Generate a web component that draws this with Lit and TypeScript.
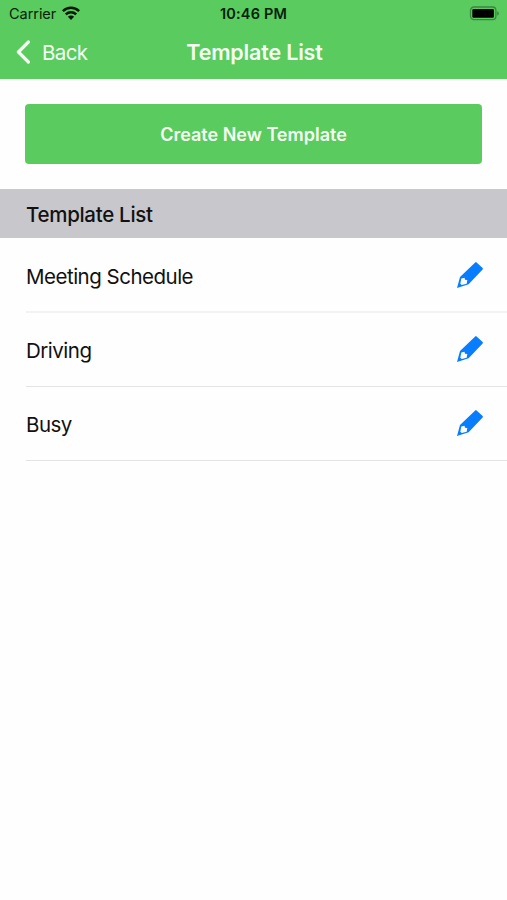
import { LitElement, html, css } from "lit";
import { customElement, property } from "lit/decorators.js";

@customElement("status-bar")
class StatusBar extends LitElement {
  static styles = css`
    :host { display: grid; grid-template-columns: 1fr auto 1fr; align-items: center; height: 28px; padding: 0 7px 0 9px; color: #06210a; }
    .carrier { display: flex; align-items: center; gap: 6px; font-size: 14.5px; letter-spacing: -0.05px; }
    .time { font-size: 14.5px; font-weight: 600; letter-spacing: 0.18px; margin-right: 2px; }
    .battery { justify-self: end; display: block; margin-top: -2px; }
    .wifi { display: block; margin-top: -2px; }
  `;
  render() {
    return html`
      <div class="carrier">
        <span>Carrier</span>
        <svg class="wifi" width="18" height="14" viewBox="0 0 18 14" fill="none" stroke="#031706" stroke-width="2.5">
          <path d="M0.9 5.1C5.5 0.7 12.5 0.7 17.1 5.1" />
          <path d="M3.8 8.4C6.8 5.6 11.2 5.6 14.2 8.4" />
          <path d="M5.9 10.8C7.8 9.2 10.2 9.2 12.1 10.8L9 14Z" fill="#031706" stroke="none" />
        </svg>
      </div>
      <div class="time">10:46 PM</div>
      <svg class="battery" width="31" height="15" viewBox="0 0 31 15">
        <rect x="1.5" y="1" width="25.4" height="12.6" rx="3.4" fill="none" stroke="#3a873e" stroke-width="1.3" />
        <rect x="3.3" y="2.9" width="21.6" height="8.8" rx="1.2" fill="#000" />
        <path d="M28.2 5.2C30.4 6 30.4 8.8 28.2 9.6Z" fill="#3a873e" />
      </svg>
    `;
  }
}

@customElement("nav-bar")
class NavBar extends LitElement {
  static styles = css`
    :host { display: grid; grid-template-columns: 1fr auto 1fr; align-items: center; height: 49px; padding: 0 15px; color: #f4fff2; }
    .back { display: flex; align-items: center; gap: 10px; font-size: 20.5px; letter-spacing: -0.6px; }
    .label { padding-top: 1px; }
    .title { font-size: 21.5px; font-weight: 600; letter-spacing: -0.18px; margin-left: 2px; }
    .chevron { display: block; margin-bottom: 1px; }
  `;
  render() {
    return html`
      <div class="back">
        <svg class="chevron" width="17" height="24" viewBox="0 0 17 24" fill="none" stroke="currentColor" stroke-width="3.2" stroke-linecap="round" stroke-linejoin="round">
          <path d="M13.4 2L3.4 12L13.4 22" />
        </svg>
        <span class="label">Back</span>
      </div>
      <div class="title">Template List</div>
    `;
  }
}

@customElement("template-row")
class TemplateRow extends LitElement {
  @property() name = "";
  static styles = css`
    :host { display: flex; align-items: center; justify-content: space-between; box-sizing: border-box; height: 74px; margin-left: 26px; padding-right: 23px; border-bottom: 1px solid #e4e4e5; font-size: 20.5px; letter-spacing: -0.5px; color: #111; }
    :host(:first-of-type) { border-bottom: 2px solid #f3f3f4; height: 75px; padding-top: 2px; }
    .name { padding-top: 3px; }
    .pencil { display: block; margin-bottom: 2px; }
  `;
  render() {
    return html`
      <span class="name">${this.name}</span>
      <svg class="pencil" width="28" height="28" viewBox="0 0 28 28">
        <path fill="#087dfd" fill-rule="evenodd" d="M19.2 1.4Q19.9 0.8 20.6 1.4L26.6 7.1Q27.3 7.8 26.6 8.5L12.6 23.2L1 26.9L4 16ZM5.3 17.6L4.3 22.8L5.7 24.1L10.7 22.7L11.3 19.1L9 18.8L8.5 16.7Z" />
      </svg>
    `;
  }
}

@customElement("app-root")
class AppRoot extends LitElement {
  static styles = css`
    :host { display: block; min-height: 900px; background: #fefefe; font-family: Inter, "Liberation Sans", sans-serif; line-height: 1.2; }
    .header { height: 79px; background: #5acb5e; }
    .action { padding: 25px 25px; height: 60px; }
    .create { display: block; width: 100%; height: 60px; border: 0; border-radius: 4px; background: #5acb5e; color: #f4fff2; font: 600 18px Inter, "Liberation Sans", sans-serif; letter-spacing: 0; }
    .section { display: flex; align-items: center; box-sizing: border-box; height: 49px; padding: 3px 0 0 26px; background: #c8c7cc; color: #111; font-size: 20.5px; font-weight: 500; letter-spacing: -0.3px; }
  `;
  private templates = ["Meeting Schedule", "Driving", "Busy"];
  render() {
    return html`
      <div class="header">
        <status-bar></status-bar>
        <nav-bar></nav-bar>
      </div>
      <div class="action"><button class="create">Create New Template</button></div>
      <div class="section">Template List</div>
      ${this.templates.map((name) => html`<template-row .name=${name}></template-row>`)}
    `;
  }
}
